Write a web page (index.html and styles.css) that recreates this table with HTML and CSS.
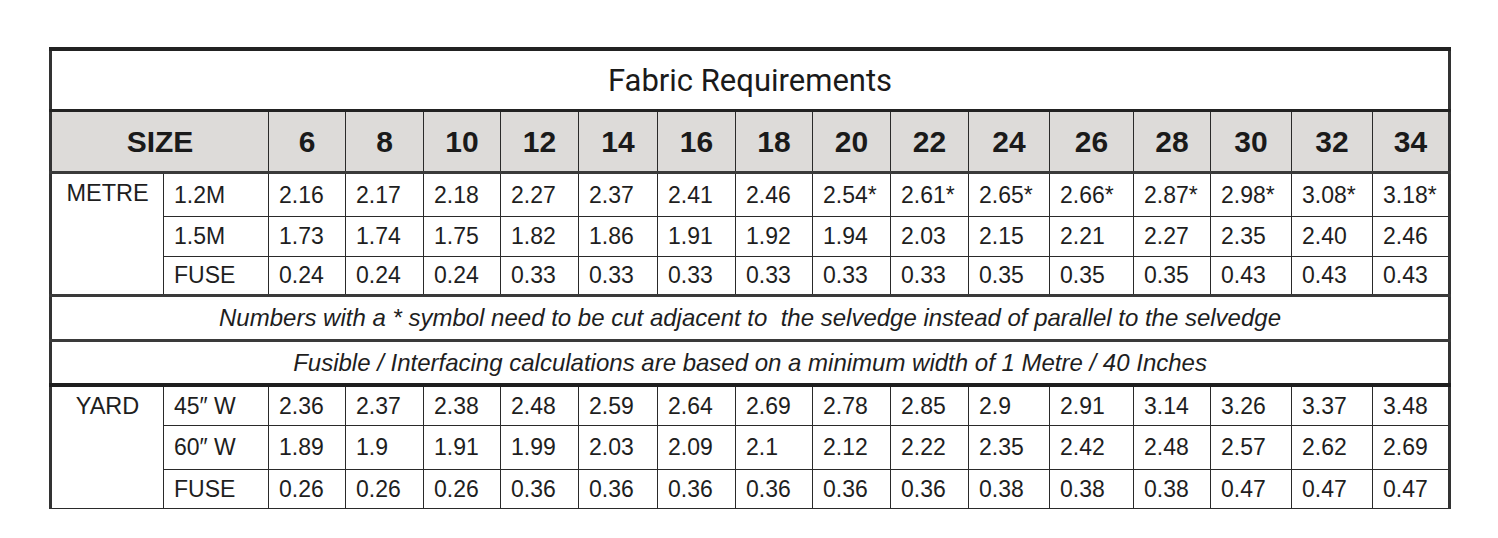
FILE: index.html
```html
<!DOCTYPE html>
<html>
<head>
<meta charset="utf-8">
<link rel="stylesheet" href="styles.css">
</head>
<body>
<div class="page">
<table class="fabric">
  <colgroup>
    <col class="c-label"><col class="c-sub">
    <col style="width:77px"><col style="width:78px"><col style="width:77px"><col style="width:78px">
    <col style="width:79px"><col style="width:78px"><col style="width:77px"><col style="width:78px">
    <col style="width:78px"><col style="width:81px"><col style="width:84px"><col style="width:77px">
    <col style="width:81px"><col style="width:81px"><col style="width:77px">
  </colgroup>
  <tr class="title-row"><td colspan="17">Fabric Requirements</td></tr>
  <tr class="head-row">
    <th colspan="2">SIZE</th>
    <th>6</th><th>8</th><th>10</th><th>12</th><th>14</th><th>16</th><th>18</th><th>20</th><th>22</th><th>24</th><th>26</th><th>28</th><th>30</th><th>32</th><th>34</th>
  </tr>
  <tr class="r-m1">
    <td class="label" rowspan="3">METRE</td><td class="sub">1.2M</td>
    <td>2.16</td><td>2.17</td><td>2.18</td><td>2.27</td><td>2.37</td><td>2.41</td><td>2.46</td><td>2.54*</td><td>2.61*</td><td>2.65*</td><td>2.66*</td><td>2.87*</td><td>2.98*</td><td>3.08*</td><td>3.18*</td>
  </tr>
  <tr class="r-m2">
    <td class="sub">1.5M</td>
    <td>1.73</td><td>1.74</td><td>1.75</td><td>1.82</td><td>1.86</td><td>1.91</td><td>1.92</td><td>1.94</td><td>2.03</td><td>2.15</td><td>2.21</td><td>2.27</td><td>2.35</td><td>2.40</td><td>2.46</td>
  </tr>
  <tr class="r-m3">
    <td class="sub">FUSE</td>
    <td>0.24</td><td>0.24</td><td>0.24</td><td>0.33</td><td>0.33</td><td>0.33</td><td>0.33</td><td>0.33</td><td>0.33</td><td>0.35</td><td>0.35</td><td>0.35</td><td>0.43</td><td>0.43</td><td>0.43</td>
  </tr>
  <tr class="note note1"><td colspan="17">Numbers with a * symbol need to be cut adjacent to&nbsp; the selvedge instead of parallel to the selvedge</td></tr>
  <tr class="note note2"><td colspan="17">Fusible / Interfacing calculations are based on a minimum width of 1 Metre / 40 Inches</td></tr>
  <tr class="r-y1">
    <td class="label" rowspan="3">YARD</td><td class="sub">45″ W</td>
    <td>2.36</td><td>2.37</td><td>2.38</td><td>2.48</td><td>2.59</td><td>2.64</td><td>2.69</td><td>2.78</td><td>2.85</td><td>2.9</td><td>2.91</td><td>3.14</td><td>3.26</td><td>3.37</td><td>3.48</td>
  </tr>
  <tr class="r-y2">
    <td class="sub">60″ W</td>
    <td>1.89</td><td>1.9</td><td>1.91</td><td>1.99</td><td>2.03</td><td>2.09</td><td>2.1</td><td>2.12</td><td>2.22</td><td>2.35</td><td>2.42</td><td>2.48</td><td>2.57</td><td>2.62</td><td>2.69</td>
  </tr>
  <tr class="r-y3">
    <td class="sub">FUSE</td>
    <td>0.26</td><td>0.26</td><td>0.26</td><td>0.36</td><td>0.36</td><td>0.36</td><td>0.36</td><td>0.36</td><td>0.36</td><td>0.38</td><td>0.38</td><td>0.38</td><td>0.47</td><td>0.47</td><td>0.47</td>
  </tr>
</table>
</div>
</body>
</html>
```
FILE: styles.css
```css
html, body {
  margin: 0;
  padding: 0;
  background: #ffffff;
}
.page {
  padding: 47px 0 0 49px;
}
.fabric {
  border-collapse: collapse;
  table-layout: fixed;
  width: 1402px;
  font-family: "Liberation Sans", Arial, sans-serif;
  color: #1e1e1e;
  border-left: 3px solid #333333;
  border-right: 3px solid #333333;
  border-top: 4px solid #222222;
  border-bottom: 1px solid #333333;
}
.c-label { width: 113px; }
.c-sub { width: 105px; }
.fabric td, .fabric th {
  border: 1px solid #2a2a2a;
  padding: 0 0 0 10px;
  font-size: 23px;
  font-weight: normal;
  text-align: left;
  vertical-align: middle;
  white-space: nowrap;
  overflow: hidden;
}
.title-row td {
  height: 58px;
  text-align: center;
  padding: 0;
  font-family: Roboto, "Liberation Sans", sans-serif;
  font-size: 31px;
  color: #1a1a1a;
  border-bottom: 3px solid #222222;
}
.head-row th {
  height: 59px;
  background: #dddbd9;
  font-weight: bold;
  font-size: 30px;
  text-align: center;
  padding: 0;
  border-bottom: 3px solid #3a3a3a;
  color: #1a1a1a;
}
.fabric td.label {
  text-align: center;
  vertical-align: top;
  padding: 6px 0 0 0;
  font-size: 23.5px;
}
.fabric td.sub {
  padding-left: 10px;
}
.r-m1 td { height: 42px; }
.r-m2 td { height: 39px; }
.r-m3 td { height: 37px; }
.r-m3 td, .r-m1 td.label { border-bottom: 3px solid #3a3a3a; }
.note td {
  text-align: center;
  font-style: italic;
  padding: 0;
  font-size: 24px;
}
.note1 td {
  height: 42px;
  border-bottom: 3px solid #3a3a3a;
}
.note2 td {
  height: 41px;
  border-bottom: 4px solid #1e1e1e;
}
.r-y1 td { height: 38px; }
.r-y2 td { height: 43px; }
.r-y3 td { height: 38px; }
```
